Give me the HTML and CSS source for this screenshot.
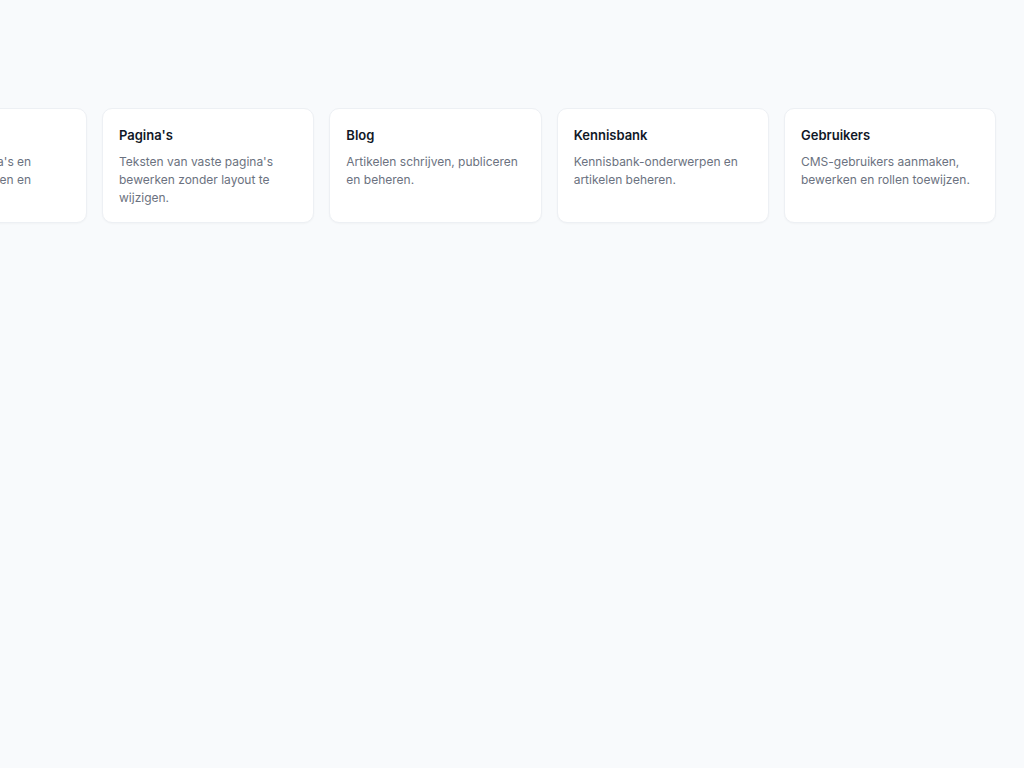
FILE: index.html
```html
<!DOCTYPE html>
<html lang="nl">
<head>
<meta charset="utf-8">
<title>CMS</title>
<link rel="stylesheet" href="styles.css">
</head>
<body>
<main class="page">
  <section class="modules">
    <a class="card" href="#">
      <h3 class="card-title">Media</h3>
      <p class="card-text">Media op de pagina's en blogartikels uploaden en beheren.</p>
    </a>
    <a class="card" href="#">
      <h3 class="card-title">Pagina's</h3>
      <p class="card-text">Teksten van vaste pagina's bewerken zonder layout te wijzigen.</p>
    </a>
    <a class="card" href="#">
      <h3 class="card-title">Blog</h3>
      <p class="card-text">Artikelen schrijven, publiceren en beheren.</p>
    </a>
    <a class="card" href="#">
      <h3 class="card-title">Kennisbank</h3>
      <p class="card-text">Kennisbank-onderwerpen en artikelen beheren.</p>
    </a>
    <a class="card" href="#">
      <h3 class="card-title">Gebruikers</h3>
      <p class="card-text">CMS-gebruikers aanmaken, bewerken en rollen toewijzen.</p>
    </a>
  </section>
</main>
</body>
</html>
```
FILE: styles.css
```css
html, body {
  margin: 0;
  padding: 0;
  background: #f8fafc;
  font-family: Inter, "Noto Sans", "Liberation Sans", sans-serif;
  overflow: hidden;
  height: 100%;
}

.page {
  padding-top: 108px;
}

.modules {
  display: flex;
  gap: 15px;
  margin-left: -125.33px;
  width: max-content;
}

.card {
  box-sizing: border-box;
  width: 212.33px;
  height: 115px;
  padding: 16px 16px;
  background: #ffffff;
  border: 1px solid #edf0f4;
  border-radius: 10px;
  box-shadow: 0 1px 2px rgba(15, 23, 42, 0.03);
  text-decoration: none;
  display: flex;
  flex-direction: column;
}

.card-title {
  margin: 0;
  font-size: 13px;
  line-height: 20px;
  font-weight: 600;
  color: #111827;
}

.card-text {
  margin: 8px 0 0;
  font-size: 12px;
  line-height: 18px;
  color: #6b7280;
}
```
